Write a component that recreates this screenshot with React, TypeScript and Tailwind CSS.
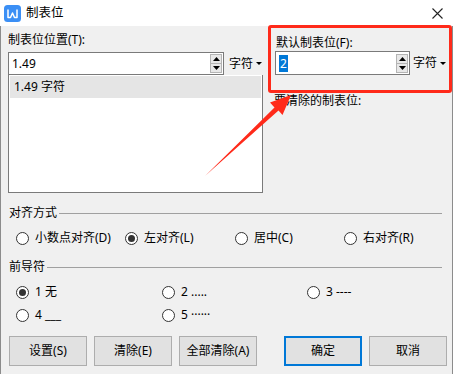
import React from 'react';

const font = { fontFamily: '"Noto Sans", "Noto Sans CJK SC", sans-serif' };

const Spinner: React.FC = () => (
  <div className="flex flex-col w-[12px] h-[19px] border border-[#b4b4b4] bg-[#e8e8e8]">
    <div className="flex-1 flex items-center justify-center border-b border-[#b4b4b4]">
      <svg width="7" height="4" viewBox="0 0 7 4"><path d="M0 4 L3.5 0 L7 4 Z" fill="#000" /></svg>
    </div>
    <div className="flex-1 flex items-center justify-center">
      <svg width="7" height="4" viewBox="0 0 7 4"><path d="M0 0 L3.5 4 L7 0 Z" fill="#000" /></svg>
    </div>
  </div>
);

const Unit: React.FC = () => (
  <div className="flex items-center gap-[3px] leading-[16px]">
    <span>字符</span>
    <svg width="6" height="3" viewBox="0 0 6 3"><path d="M0 0 L3 3 L6 0 Z" fill="#000" /></svg>
  </div>
);

const Radio: React.FC<{ checked?: boolean; label: string; className?: string }> = ({ checked, label, className }) => (
  <div className={`flex items-center gap-[6px] h-[16px] leading-[16px] ${className ?? ''}`}>
    <div className="w-[13px] h-[13px] rounded-full border border-[#333] bg-white flex items-center justify-center">
      {checked && <div className="w-[7px] h-[7px] rounded-full bg-[#333]" />}
    </div>
    <span className="whitespace-pre">{label}</span>
  </div>
);

const Btn: React.FC<{ label: string; primary?: boolean }> = ({ label, primary }) => (
  <div
    className={`w-[78px] h-[30px] flex items-center justify-center bg-[#e1e1e1] ${
      primary ? 'border-2 border-[#0078d7]' : 'border border-[#adadad]'
    }`}
  >
    {label}
  </div>
);

const GroupTitle: React.FC<{ label: string }> = ({ label }) => (
  <div className="flex items-center h-[16px] leading-[16px] pl-[8px] pr-[10px]">
    <span>{label}</span>
    <div className="flex-1 h-px bg-[#a0a0a0] ml-[2px]" />
  </div>
);

export default function App() {
  return (
    <div className="relative w-[457px] h-[374px] bg-white overflow-hidden text-[12px] text-black" style={font}>
      {/* title bar */}
      <div className="h-[26px] bg-white flex items-center">
        <svg width="17" height="17" viewBox="0 0 17 17" className="ml-[4px]">
          <rect x="0" y="0" width="17" height="17" rx="3.5" fill="#3b8ff5" />
          <path d="M4 4.5 L4 12.5 L6.5 12.5 L8.5 8 L10.5 12.5 L13 12.5 L13 4.5" fill="none" stroke="#fff" strokeWidth="1.5" strokeLinejoin="round" />
        </svg>
        <span className="ml-[5px] text-[12.5px] leading-[16px]">制表位</span>
        <div className="flex-1" />
        <svg width="11" height="11" viewBox="0 0 11 11" className="mr-[14px]">
          <path d="M0.5 0.5 L10.5 10.5 M10.5 0.5 L0.5 10.5" stroke="#222" strokeWidth="1.1" />
        </svg>
      </div>

      {/* body */}
      <div className="w-[453px] h-[348px] bg-[#f0f0f0] border-l border-r border-[#8c8c8c] flex flex-col">
        <div className="flex h-[167px]">
          {/* left column */}
          <div className="ml-[7px] w-[256px] flex flex-col">
            <div className="mt-[6px] h-[16px] leading-[16px]">制表位位置(T):</div>
            <div className="mt-[4px] flex items-center">
              <div className="w-[216px] h-[23px] border border-[#7a7a7a] bg-white flex items-center pl-[3px] pr-[1px]">
                <span className="flex-1 leading-[16px]">1.49</span>
                <Spinner />
              </div>
              <div className="ml-[5px]">
                <Unit />
              </div>
            </div>
            <div className="h-[119px] border-x border-b border-[#7a7a7a] bg-white pt-px px-px">
              <div className="h-[22px] bg-[#e5e5e5] flex items-center pl-[4px] leading-[16px]">1.49 字符</div>
            </div>
          </div>

          {/* right column */}
          <div className="ml-[5px] flex flex-col">
            <div className="-mt-[1px] w-[184px] h-[68px] border-[3px] border-[#ff2a1a] rounded-[3px] pt-[7px] pl-[4px] flex flex-col">
              <div className="h-[16px] leading-[16px] pl-[1px]">默认制表位(F):</div>
              <div className="flex items-center">
                <div className="w-[135px] h-[24px] border border-[#7a7a7a] bg-white flex items-center pl-[3px] pr-[1px]">
                  <div className="flex-1 flex">
                    <span className="bg-[#0078d7] text-white leading-[17px] px-px">2</span>
                  </div>
                  <Spinner />
                </div>
                <div className="ml-[3px]">
                  <Unit />
                </div>
              </div>
            </div>
            <div className="ml-[6px] h-[16px] leading-[16px]">要清除的制表位:</div>
          </div>
        </div>

        <div className="mt-[12px]">
          <GroupTitle label="对齐方式" />
        </div>
        <div className="mt-[9px] flex pl-[15px]">
          <Radio label="小数点对齐(D)" className="w-[109px]" />
          <Radio checked label="左对齐(L)" className="w-[110px]" />
          <Radio label="居中(C)" className="w-[109px]" />
          <Radio label="右对齐(R)" />
        </div>

        <div className="mt-[13px]">
          <GroupTitle label="前导符" />
        </div>
        <div className="mt-[9px] flex pl-[15px]">
          <Radio checked label="1 无" className="w-[146px]" />
          <Radio label="2 ....." className="w-[145px]" />
          <Radio label="3 ----" />
        </div>
        <div className="mt-[7px] flex pl-[15px]">
          <Radio label="4 ___" className="w-[146px]" />
          <Radio label="5 ······" />
        </div>

        <div className="mt-[13px] flex pl-[8px]">
          <div className="flex gap-[7px]">
            <Btn label="设置(S)" />
            <Btn label="清除(E)" />
            <Btn label="全部清除(A)" />
          </div>
          <div className="flex gap-[7px] ml-[27px]">
            <Btn label="确定" primary />
            <Btn label="取消" />
          </div>
        </div>
      </div>

      {/* annotation arrow */}
      <svg className="absolute left-0 top-0 pointer-events-none" width="457" height="374" viewBox="0 0 457 374">
        <polygon points="205,176 274.5,107.5 270,102.5 291,95 282.5,115 278.5,110.5" fill="#ff2a1a" />
      </svg>
    </div>
  );
}
